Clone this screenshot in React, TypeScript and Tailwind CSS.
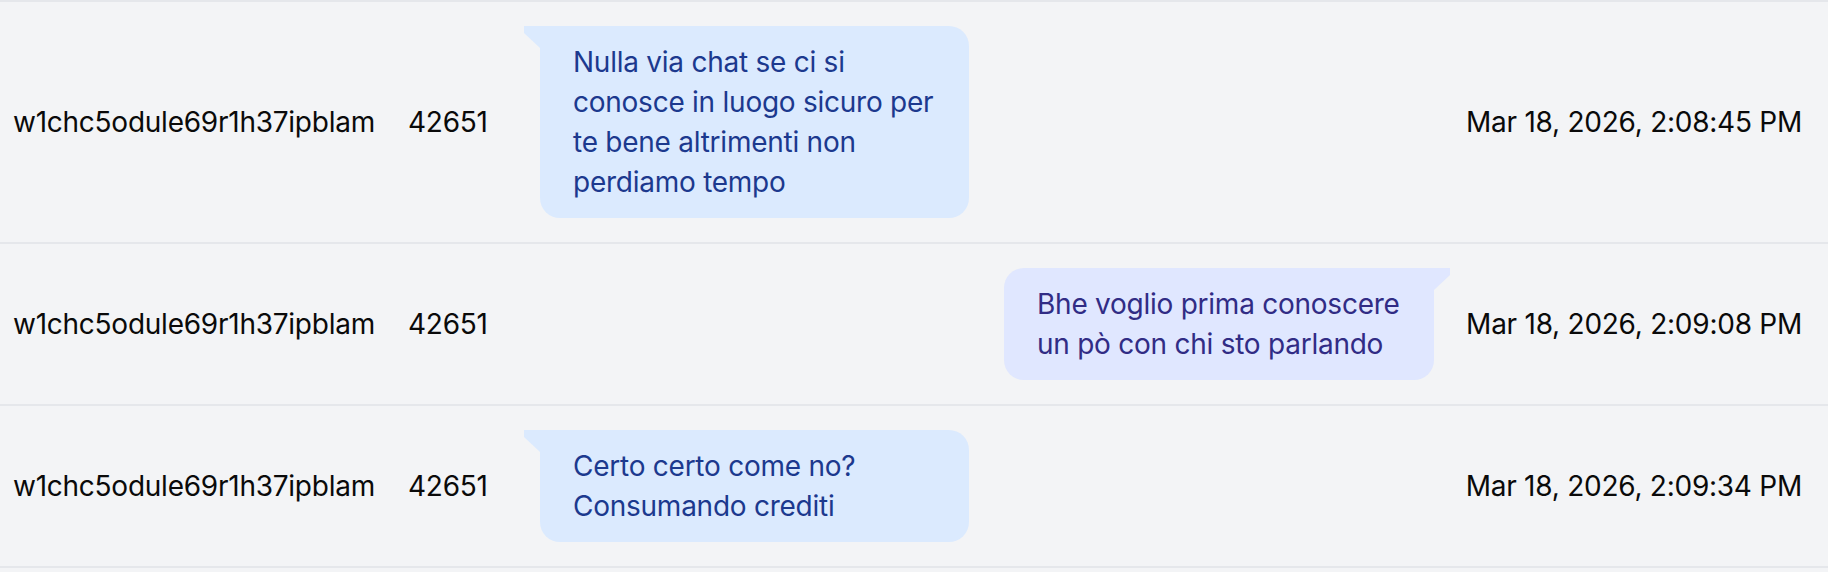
const rows = [
  {
    user: 'w1chc5odule69r1h37ipblam',
    id: '42651',
    lines: ['Nulla via chat se ci si', 'conosce in luogo sicuro per', 'te bene altrimenti non', 'perdiamo tempo'],
    mine: false,
    time: 'Mar 18, 2026, 2:08:45 PM',
  },
  {
    user: 'w1chc5odule69r1h37ipblam',
    id: '42651',
    lines: ['Bhe voglio prima conoscere', 'un pò con chi sto parlando'],
    mine: true,
    time: 'Mar 18, 2026, 2:09:08 PM',
  },
  {
    user: 'w1chc5odule69r1h37ipblam',
    id: '42651',
    lines: ['Certo certo come no?', 'Consumando crediti'],
    mine: false,
    time: 'Mar 18, 2026, 2:09:34 PM',
  },
]

function Text({ lines }: { lines: string[] }) {
  return (
    <>
      {lines.map((l, i) => (
        <span key={i} className="block whitespace-nowrap">{l}</span>
      ))}
    </>
  )
}

function Bubble({ lines, mine }: { lines: string[]; mine: boolean }) {
  if (mine) {
    return (
      <div className="relative mr-4 w-[430px]">
        <div className="rounded-[20px] rounded-tr-none bg-indigo-100 px-[33px] py-4 text-indigo-900"><Text lines={lines} /></div>
        <span className="absolute top-0 right-[-16px] h-[22px] w-4 bg-indigo-100 [clip-path:polygon(0_0,100%_0,100%_32%,0_100%)]" />
      </div>
    )
  }
  return (
    <div className="relative ml-4 w-[429px]">
      <div className="rounded-[20px] rounded-tl-none bg-blue-100 px-[33px] py-4 text-blue-900"><Text lines={lines} /></div>
      <span className="absolute top-0 left-[-16px] h-[22px] w-4 bg-blue-100 [clip-path:polygon(0_0,100%_0,100%_100%,0_32%)]" />
    </div>
  )
}

export default function App() {
  return (
    <div className="min-h-screen bg-gray-100 font-['Inter',sans-serif] text-[28px] leading-[40px] tracking-[-0.25px] text-[#0a0a0a]">
      <div className="border-t-2 border-gray-200">
        {rows.map((r, i) => (
          <div key={i} className="flex items-center border-b-2 border-gray-200 py-6">
            <div className="w-[408px] shrink-0 pl-[13px] whitespace-nowrap">{r.user}</div>
            <div className="w-[116px] shrink-0">{r.id}</div>
            <div className={`flex flex-1 ${r.mine ? 'justify-end' : 'justify-start'}`}>
              <Bubble lines={r.lines} mine={r.mine} />
            </div>
            <div className="w-[378px] shrink-0 pr-[26px] text-right whitespace-nowrap">{r.time}</div>
          </div>
        ))}
      </div>
    </div>
  )
}
